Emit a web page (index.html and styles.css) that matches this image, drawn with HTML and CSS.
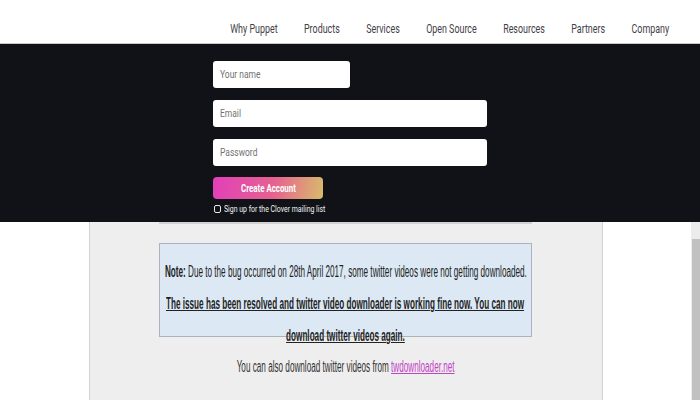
FILE: index.html
```html
<!DOCTYPE html>
<html lang="en">
<head>
<meta charset="utf-8">
<title>Twitter video downloader</title>
<link rel="stylesheet" href="styles.css">
</head>
<body>
<header class="topbar">
  <ul class="nav">
    <li>Why Puppet</li>
    <li>Products</li>
    <li>Services</li>
    <li>Open Source</li>
    <li>Resources</li>
    <li>Partners</li>
    <li>Company</li>
  </ul>
</header>
<section class="signup">
  <div class="form">
    <div class="field field-short"><span class="ph">Your name</span></div>
    <div class="field"><span class="ph">Email</span></div>
    <div class="field"><span class="ph">Password</span></div>
    <div class="btn"><span class="btn-text">Create Account</span></div>
    <label class="check-row"><span class="box"></span><span class="check-text">Sign up for the Clover mailing list</span></label>
  </div>
</section>
<section class="lower">
  <div class="side-left"></div>
  <div class="main">
    <div class="strip"></div>
    <div class="note">
      <div class="line"><span><b>Note:</b> Due to the bug occurred on 28th April 2017, some twitter videos were not getting downloaded.</span></div>
      <div class="line strong"><span>The issue has been resolved and twitter video downloader is working fine now. You can now</span></div>
      <div class="line strong"><span>download twitter videos again.</span></div>
    </div>
    <div class="line also"><span>You can also download twitter videos from <a href="#">twdownloader.net</a></span></div>
  </div>
  <div class="side-right"></div>
  <div class="scrollbar"><div class="thumb"></div></div>
</section>
</body>
</html>
```
FILE: styles.css
```css
html, body {
  margin: 0;
  padding: 0;
}
body {
  width: 700px;
  height: 400px;
  overflow: hidden;
  background: #ffffff;
  font-family: Roboto, "Liberation Sans", sans-serif;
}

/* header */
.topbar {
  height: 23px;
  padding: 20px 31px 0 0;
  border-bottom: 1px solid #c9c9c9;
  display: flex;
  justify-content: flex-end;
  align-items: flex-start;
  background: #fff;
}
.nav {
  list-style: none;
  margin: 0;
  padding: 0;
  display: flex;
  gap: 40px;
  font-size: 13.5px;
  line-height: 16px;
  color: #3f4247;
  white-space: nowrap;
  transform: scaleX(0.66);
  transform-origin: right center;
}

/* dark signup panel */
.signup {
  height: 161px;
  padding: 17px 0 0 213px;
  background: #101217;
}
.form {
  display: flex;
  flex-direction: column;
  gap: 12px;
  width: 274px;
}
.field {
  width: 274px;
  height: 27px;
  box-sizing: border-box;
  padding-left: 7px;
  background: #ffffff;
  border-radius: 3px;
  display: flex;
  align-items: center;
}
.field-short {
  width: 137px;
}
.ph {
  font-size: 11px;
  color: #727272;
  white-space: nowrap;
  transform: scaleX(0.77);
  transform-origin: left center;
}
.btn {
  margin-top: -1px;
  width: 110px;
  height: 22px;
  border-radius: 4px;
  background: linear-gradient(100deg, #e13fba 0%, #e6628f 55%, #d8bc6b 100%);
  display: flex;
  justify-content: center;
  align-items: center;
}
.btn-text {
  font-size: 10.5px;
  font-weight: 700;
  color: #ffffff;
  white-space: nowrap;
  transform: scaleX(0.75);
}
.check-row {
  margin-top: -7px;
  height: 10px;
  display: flex;
  align-items: center;
  gap: 3px;
  padding-left: 1px;
}
.box {
  width: 5px;
  height: 6px;
  border: 1px solid #e8e8e8;
  border-radius: 2px;
  flex: none;
}
.check-text {
  font-size: 9px;
  color: #f2f2f2;
  white-space: nowrap;
  transform: scaleX(0.77);
  transform-origin: left center;
}

/* lower page */
.lower {
  display: flex;
  height: 178px;
}
.side-left {
  width: 89px;
  background: #ffffff;
}
.main {
  width: 512px;
  background: #eeeeee;
  border-left: 1px solid #d3d3d3;
  border-right: 1px solid #d3d3d3;
  font-family: "Liberation Sans", Arial, sans-serif;
  color: #222222;
}
.strip {
  margin-left: 69px;
  width: 373px;
  height: 2px;
  background: #d2d2d2;
}
.note {
  margin: 19px 0 0 69px;
  width: 373px;
  height: 94px;
  box-sizing: border-box;
  padding-top: 12px;
  background: #dce9f5;
  border: 1px solid #aab3bc;
}
.line {
  display: flex;
  justify-content: center;
  white-space: nowrap;
  font-size: 16px;
  line-height: 32px;
}
.line span {
  display: inline-block;
  transform: scaleX(0.51);
  transform-origin: center center;
}
.strong {
  font-weight: 700;
}
.strong span {
  text-decoration: underline;
}
.also {
  margin: 14px 0 0 69px;
  width: 373px;
  color: #333333;
}
.also a {
  color: #c244c6;
  text-decoration: underline;
}
.side-right {
  width: 88px;
  background: #ffffff;
}
.scrollbar {
  width: 9px;
  background: #ececec;
  display: flex;
  flex-direction: column;
}
.thumb {
  margin: 17px 0 0 1px;
  flex: 1;
  background: #c1c1c1;
}
```
